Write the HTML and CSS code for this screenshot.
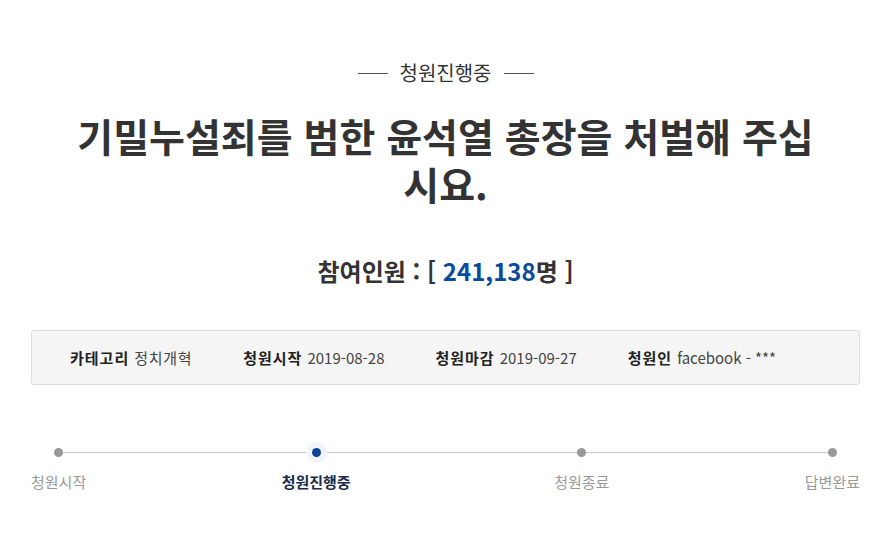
FILE: index.html
```html
<!DOCTYPE html>
<html lang="ko">
<head>
<meta charset="utf-8">
<title>청원진행중</title>
<link rel="stylesheet" href="styles.css">
</head>
<body>
<main class="page">
  <div class="status"><span class="dash"></span><span class="status-text">청원진행중</span><span class="dash"></span></div>
  <h1 class="title">기밀누설죄를 범한 윤석열 총장을 처벌해 주십<br>시요.</h1>
  <p class="count">참여인원 : [ <span class="num">241,138</span>명 ]</p>
  <ul class="info">
    <li class="info-item"><strong>카테고리</strong><span class="ko">정치개혁</span></li>
    <li class="info-item"><strong>청원시작</strong><span>2019-08-28</span></li>
    <li class="info-item"><strong>청원마감</strong><span>2019-09-27</span></li>
    <li class="info-item"><strong>청원인</strong><span>facebook - ***</span></li>
  </ul>
  <ol class="steps">
    <li class="step"><span class="dot"></span><span class="step-label">청원시작</span></li>
    <li class="step active"><span class="dot"></span><span class="step-label">청원진행중</span></li>
    <li class="step"><span class="dot"></span><span class="step-label">청원종료</span></li>
    <li class="step"><span class="dot"></span><span class="step-label">답변완료</span></li>
  </ol>
</main>
</body>
</html>
```

FILE: styles.css
```css
* { box-sizing: border-box; }
html, body { margin: 0; padding: 0; background: #fff; }
body {
  font-family: "Noto Sans CJK KR", "Noto Sans", sans-serif;
  color: #333;
}
.page {
  margin: 0 31px;
  padding-top: 59px;
}
.status {
  display: flex;
  justify-content: center;
  align-items: center;
  gap: 12px;
  font-size: 20px;
  line-height: 28px;
  color: #333;
}
.dash {
  display: block;
  width: 30px;
  height: 1px;
  background: #555;
}
.title {
  margin: 24px 0 0;
  text-align: center;
  font-size: 39px;
  line-height: 48px;
  font-weight: 700;
  color: #333;
}
.count {
  margin: 48px 0 0;
  text-align: center;
  font-size: 24px;
  line-height: 32px;
  font-weight: 700;
  color: #333;
}
.num { color: #0b4a9a; }
.info {
  list-style: none;
  margin: 43px 0 0;
  padding: 0 38px;
  height: 55px;
  display: flex;
  align-items: center;
  gap: 51px;
  background: #f5f5f5;
  border: 1px solid #dcdcdc;
  border-radius: 3px;
  font-size: 15px;
  color: #333;
}
.info-item { display: flex; gap: 5px; align-items: baseline; }
.info-item strong { font-weight: 700; color: #222; letter-spacing: 1px; }
.info-item span { color: #444; }
.info-item .ko { letter-spacing: 0.7px; }
.steps {
  list-style: none;
  margin: 63px 0 0;
  padding: 0;
  display: flex;
  justify-content: space-between;
  position: relative;
}
.steps::before {
  content: "";
  position: absolute;
  left: 27px;
  right: 27px;
  top: 4px;
  height: 1px;
  background: #c8c8c8;
}
.step {
  display: flex;
  flex-direction: column;
  align-items: center;
  position: relative;
}
.step.active { margin-right: 8px; }
.dot {
  width: 9px;
  height: 9px;
  border-radius: 50%;
  background: #999;
}
.step.active .dot {
  background: #0b4496;
  box-shadow: 0 0 0 6px #f1f4fa;
}
.step-label {
  margin-top: 15px;
  font-size: 15px;
  line-height: 20px;
  color: #999;
}
.step.active .step-label {
  color: #1b2a4a;
  font-weight: 700;
}
```
